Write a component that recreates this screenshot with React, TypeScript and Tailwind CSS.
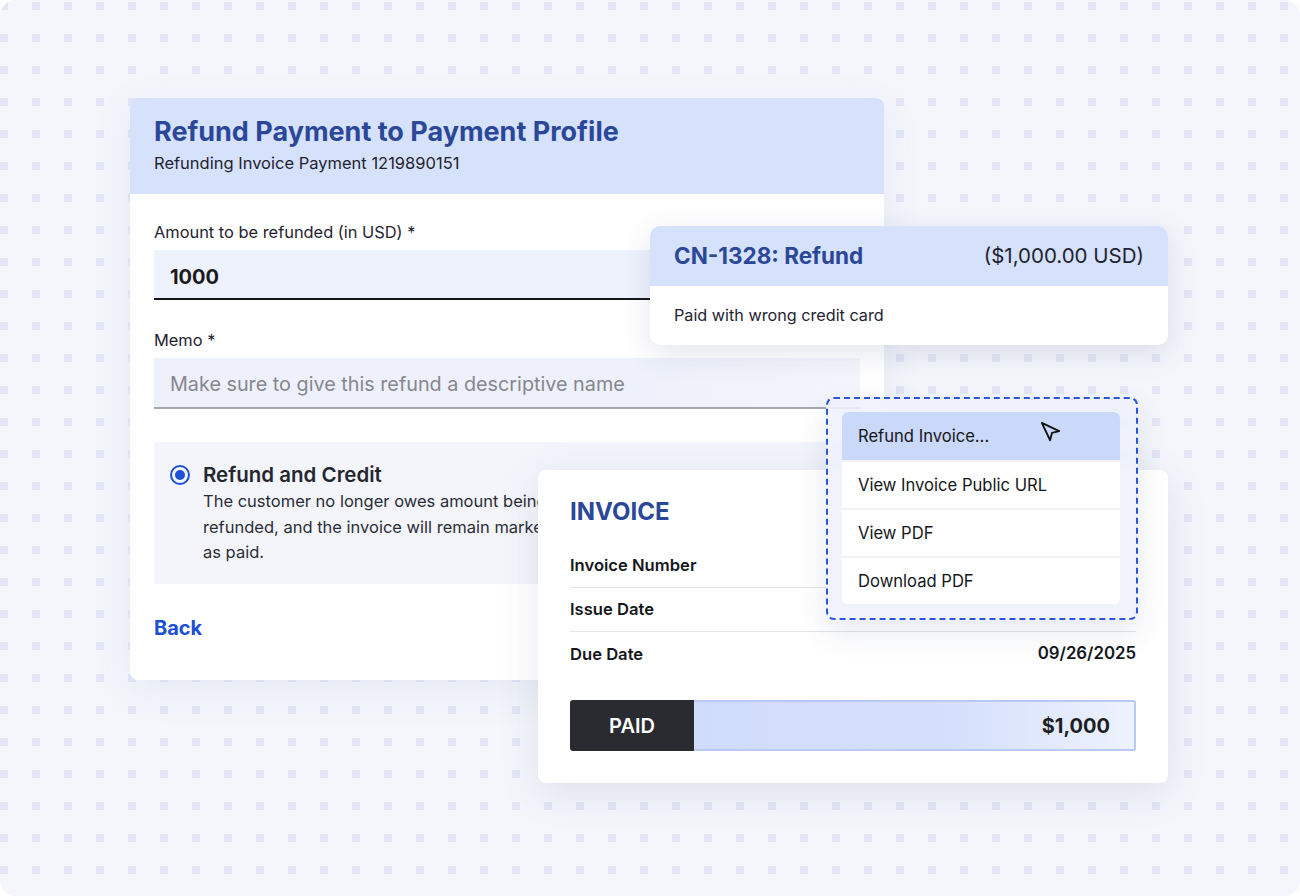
import React from 'react'

const font = { fontFamily: 'Inter, "Noto Sans", sans-serif' }

function DotGrid() {
  return (
    <svg className="absolute inset-0 h-full w-full" aria-hidden="true">
      <defs>
        <pattern id="dots" width="32" height="32" patternUnits="userSpaceOnUse">
          <rect x="0" y="2" width="8" height="8" fill="#e2e6f6" />
        </pattern>
      </defs>
      <rect width="100%" height="100%" fill="url(#dots)" />
    </svg>
  )
}

function Cursor() {
  return (
    <svg width="22" height="22" viewBox="0 0 24 24" fill="none" stroke="#111" strokeWidth="2" strokeLinejoin="round">
      <polygon points="21,11 2,2 11,21 13,13" />
    </svg>
  )
}

function RefundCard() {
  return (
    <div className="absolute left-[130px] top-[98px] flex h-[582px] w-[754px] flex-col overflow-hidden rounded-lg bg-white shadow-[0_10px_40px_rgba(70,90,170,0.08)]">
      <div className="bg-[#d6e1fc] px-6 pb-[20px] pt-[18px]">
        <h1 className="text-[27px] font-bold leading-8 text-[#2b4798]">Refund Payment to Payment Profile</h1>
        <p className="mt-1 text-[16.5px] leading-[22px] text-[#1f2330]">Refunding Invoice Payment 1219890151</p>
      </div>

      <div className="flex flex-col px-6 pt-[27px]">
        <label className="text-[16.4px] leading-[22px] text-[#1f2330]">Amount to be refunded (in USD) *</label>
        <div className="mt-[7px] flex h-[50px] items-center border-b-2 border-[#15161a] bg-[#eef2fd] px-4 pt-[6px]">
          <span className="text-[20px] font-bold text-[#1a1b20]">1000</span>
        </div>

        <label className="mt-[29px] text-[16.4px] leading-[22px] text-[#1f2330]">Memo *</label>
        <div className="mt-[7px] flex h-[51px] items-center border-b-2 border-[#a5a7ae] bg-[linear-gradient(90deg,#eef1fb,#eef1fb_70%,#f4f5fb)] px-4 pt-[5px]">
          <span className="text-[19.8px] text-[#85878f]">Make sure to give this refund a descriptive name</span>
        </div>

        <div className="mt-[33px] flex h-[142px] gap-[13px] bg-[#f3f5fb] pl-4 pt-[19px]">
          <div className="mt-[4px] flex h-[20px] w-[20px] shrink-0 items-center justify-center rounded-full border-2 border-[#1f4fd8]">
            <div className="h-[10px] w-[10px] rounded-full bg-[#1f4fd8]" />
          </div>
          <div>
            <div className="text-[20.5px] font-semibold leading-7 text-[#25272e]">Refund and Credit</div>
            <p className="text-[16.5px] leading-[25.5px] text-[#2b2d36]">
              The customer no longer owes amount being
              <br />
              refunded, and the invoice will remain marked
              <br />
              as paid.
            </p>
          </div>
        </div>

        <div className="mt-[30px] text-[20px] font-bold leading-7 text-[#1a4fd6]">Back</div>
      </div>
    </div>
  )
}

function CreditNoteCard() {
  return (
    <div className="absolute left-[650px] top-[226px] w-[518px] overflow-hidden rounded-[10px] bg-white shadow-[0_8px_30px_rgba(60,70,120,0.14)]">
      <div className="flex h-[60px] items-center justify-between bg-[#d6e1fc] px-6">
        <span className="text-[22.5px] font-bold text-[#2b4798]">CN-1328: Refund</span>
        <span className="text-[20.5px] text-[#1f2330]">($1,000.00 USD)</span>
      </div>
      <div className="flex h-[59px] items-center px-6 text-[16.2px] text-[#1f2330]">Paid with wrong credit card</div>
    </div>
  )
}

function InvoiceCard() {
  const rows = [
    { label: 'Invoice Number', value: '' },
    { label: 'Issue Date', value: '' },
    { label: 'Due Date', value: '09/26/2025' },
  ]
  return (
    <div className="absolute left-[538px] top-[470px] w-[630px] rounded-lg bg-white px-8 pb-8 pt-[26px] shadow-[0_10px_40px_rgba(60,70,130,0.12)]">
      <div className="text-[24px] font-bold leading-8 text-[#2b4798]">INVOICE</div>
      <div className="mt-[16px]">
        {rows.map((row, i) => (
          <div
            key={row.label}
            className={`flex h-[44px] items-center justify-between ${i < rows.length - 1 ? 'border-b border-[#e4e5ea]' : ''}`}
          >
            <span className="text-[16.6px] font-semibold text-[#15161b]">{row.label}</span>
            <span className="text-[16.8px] font-semibold text-[#15161b]">{row.value}</span>
          </div>
        ))}
      </div>
      <div className="mt-[24px] flex h-[51px] overflow-hidden rounded-[3px]">
        <div className="flex w-[124px] items-center justify-center bg-[#2a2b31] text-[20px] font-semibold text-white">
          PAID
        </div>
        <div className="flex flex-1 items-center justify-end border-2 border-l-0 border-[#b9c9f4] bg-[linear-gradient(90deg,#d0dcfb,#d5e0fc_60%,#eef2fd)] pr-6 text-[20px] font-bold text-[#1d1e24]">
          $1,000
        </div>
      </div>
    </div>
  )
}

function ActionMenu() {
  const items = ['Refund Invoice...', 'View Invoice Public URL', 'View PDF', 'Download PDF']
  return (
    <div className="absolute left-[826px] top-[397px] w-[312px] rounded-lg border-2 border-dashed border-[#2a55d8] bg-[#eef2fc]/90 pb-[14px] pl-[14px] pr-[16px] pt-[13px] shadow-[0_12px_30px_rgba(60,70,130,0.12)]">
      <div className="overflow-hidden rounded-md bg-white">
        {items.map((item, i) => (
          <div
            key={item}
            className={`flex h-[48px] items-center justify-between px-4 text-[16.6px] text-[#15161b] ${
              i === 0 ? 'bg-[#cad8fa]' : 'border-t-2 border-[#f1f2f5]'
            }`}
          >
            <span>{item}</span>
            {i === 0 && (
              <span className="mr-[42px] mt-[-8px]">
                <Cursor />
              </span>
            )}
          </div>
        ))}
      </div>
    </div>
  )
}

export default function App() {
  return (
    <div className="h-[896px] w-[1300px] bg-white" style={font}>
      <div className="relative h-full w-full overflow-hidden rounded-2xl bg-[#f4f6fb]">
        <DotGrid />
        <RefundCard />
        <InvoiceCard />
        <CreditNoteCard />
        <ActionMenu />
      </div>
    </div>
  )
}
